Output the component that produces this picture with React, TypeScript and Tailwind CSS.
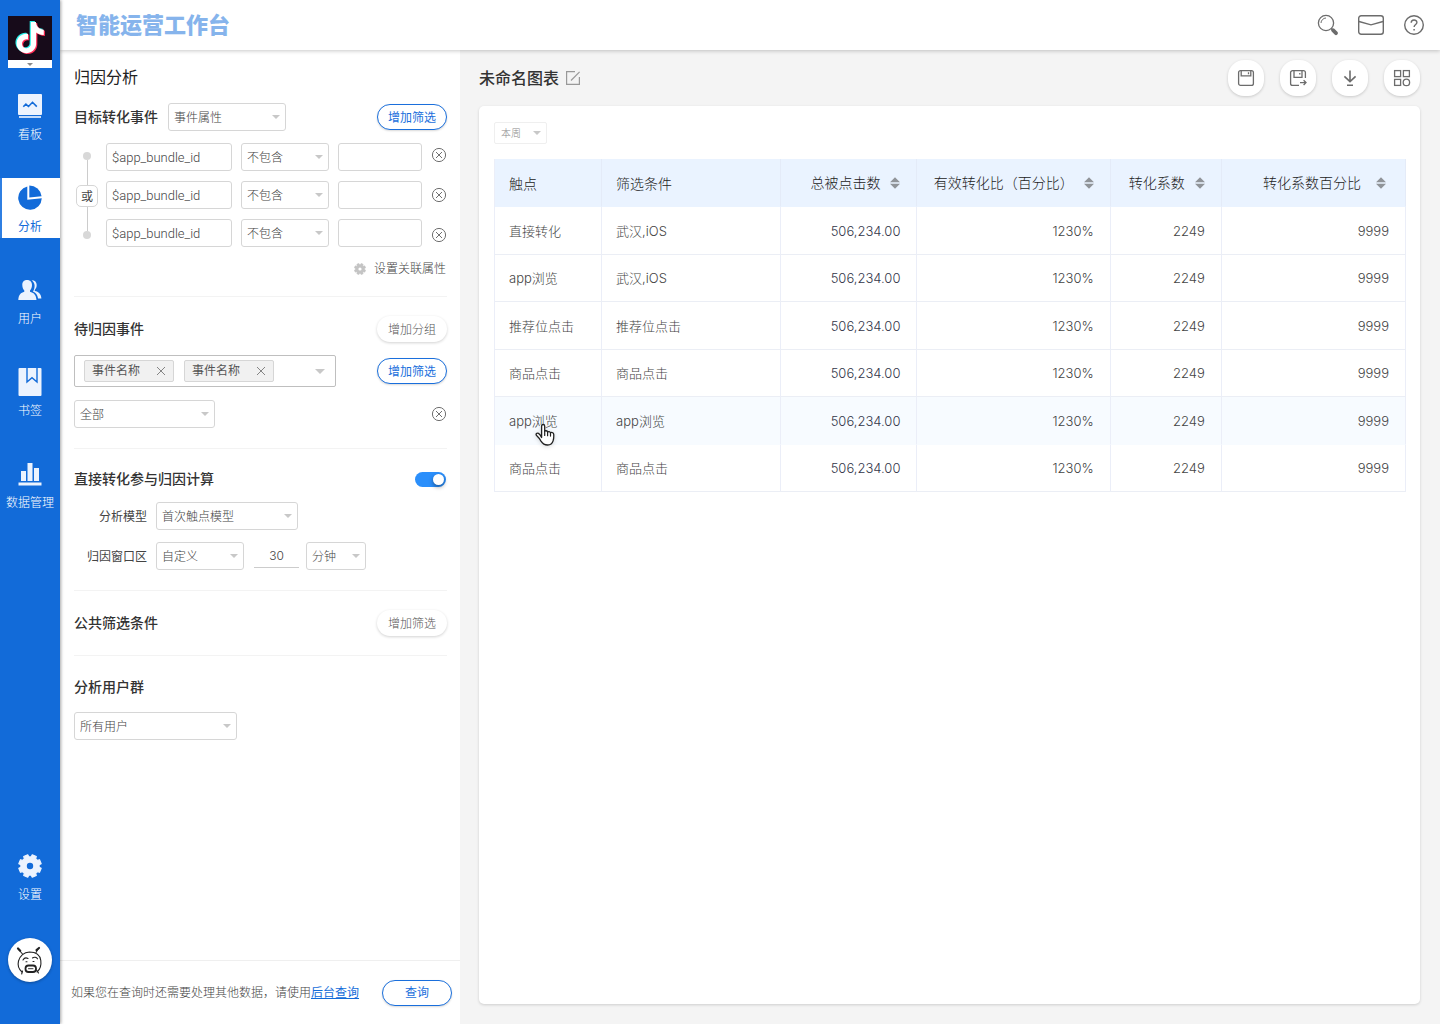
import type { ReactNode } from "react";

const NOTE =
  "M12.525.02c1.31-.02 2.61-.01 3.91-.02.08 1.53.63 3.09 1.75 4.17 1.12 1.11 2.7 1.62 4.24 1.79v4.03c-1.44-.05-2.89-.35-4.2-.97-.57-.26-1.1-.59-1.62-.93-.01 2.92.01 5.84-.02 8.75-.08 1.4-.54 2.79-1.35 3.94-1.31 1.92-3.58 3.17-5.91 3.21-1.43.08-2.86-.31-4.08-1.03-2.02-1.19-3.44-3.37-3.65-5.71-.02-.5-.03-1-.01-1.49.18-1.9 1.12-3.72 2.58-4.96 1.66-1.44 3.98-2.13 6.15-1.72.02 1.48-.04 2.96-.04 4.44-.99-.32-2.15-.23-3.02.37-.63.41-1.11 1.04-1.36 1.75-.21.51-.15 1.07-.14 1.61.24 1.64 1.82 3.02 3.5 2.87 1.12-.01 2.19-.66 2.77-1.61.19-.33.4-.67.41-1.06.1-1.79.06-3.57.07-5.36.01-4.03-.01-8.05.02-12.07z";

const GEAR_POINTS = Array.from({ length: 8 }, (_, i) => {
  const mid = 22.5 + i * 45;
  return [
    [-15, 9.2],
    [-11, 11.4],
    [11, 11.4],
    [15, 9.2],
  ]
    .map(([da, r]) => {
      const a = ((mid + da) * Math.PI) / 180;
      return `${(12 + r * Math.cos(a)).toFixed(2)},${(12 + r * Math.sin(a)).toFixed(2)}`;
    })
    .join(" ");
}).join(" ");

function Gear({ className, hole }: { className: string; hole: string }) {
  return (
    <svg viewBox="0 0 24 24" className={className} aria-hidden="true">
      <polygon points={GEAR_POINTS} fill="currentColor" stroke="currentColor" strokeWidth="1.2" strokeLinejoin="round" />
      <circle cx="12" cy="12" r="3.2" fill={hole} />
    </svg>
  );
}

function Caret({ className }: { className: string }) {
  return (
    <svg viewBox="0 0 8 4" className={className} aria-hidden="true">
      <path d="M0 0h8L4 4z" fill="currentColor" />
    </svg>
  );
}

function Select({ label, value, className }: { label: string; value: string; className: string }) {
  return (
    <div className={`relative shrink-0 ${className}`}>
      <select
        aria-label={label}
        className="block h-7 w-full appearance-none rounded-[3px] border border-[#d6d6d6] bg-white pt-0.5 pr-5 pl-[5px] text-xs font-light text-[#444]"
      >
        <option>{value}</option>
      </select>
      <Caret className="pointer-events-none absolute top-3 right-1.5 h-1 w-2 text-[#c8c8c8]" />
    </div>
  );
}

function Pill({ children, primary }: { children: ReactNode; primary?: boolean }) {
  return (
    <button
      type="button"
      className={`h-[26px] w-[70px] shrink-0 rounded-full bg-white pt-px text-xs ${
        primary
          ? "border border-[#1a6fdc] text-[#1a6fdc] shadow-[0_1px_2px_rgba(0,0,0,0.15)]"
          : "font-light text-[#555] shadow-[0_1px_3px_rgba(0,0,0,0.18)]"
      }`}
    >
      {children}
    </button>
  );
}

function Remove({ label }: { label: string }) {
  return (
    <button type="button" aria-label={label} className="block size-4 shrink-0">
      <svg viewBox="0 0 16 16" fill="none" stroke="#707070" strokeWidth="1" className="size-4">
        <circle cx="8" cy="8" r="6.6" />
        <path d="M5 5l6 6M11 5l-6 6" />
      </svg>
    </button>
  );
}

function Logo() {
  return (
    <button type="button" aria-label="切换应用" className="mt-4 block w-11 shrink-0 bg-white">
      <svg viewBox="0 0 44 44" className="block size-11">
        <rect width="44" height="44" fill="#170b1a" />
        <g transform="translate(6.6 6) scale(1.3)">
          <path d={NOTE} fill="#2af0ea" transform="translate(-0.9 -0.7)" />
          <path d={NOTE} fill="#fe2c55" transform="translate(0.9 0.7)" />
          <path d={NOTE} fill="#fff" />
        </g>
      </svg>
      <span className="flex h-2 items-center justify-center">
        <Caret className="h-[3px] w-1.5 text-[#8a8a8a]" />
      </span>
    </button>
  );
}

const BoardIcon = (
  <svg viewBox="0 0 24 24" className="size-6">
    <rect width="24" height="21" rx="1" fill="#ecf3fe" />
    <rect x="1" y="22" width="22" height="2" fill="#c3dbfa" />
    <path d="M5.3 12.7l2.6-2.6 2.6 2.4 4-4.2 4.3 4.3" fill="none" stroke="#126bd9" strokeWidth="1.6" />
  </svg>
);
const PieIcon = (
  <svg viewBox="0 0 24 26" className="h-[26px] w-6" fill="#126bd9">
    <path d="M9.3 1.4V14.8L23.8 13.3A11.8 11.8 0 1 1 9.3 1.4z" />
    <path d="M11.3 0.4A12.5 12.5 0 0 1 23.6 11.2L11.3 12.5z" />
  </svg>
);
const UsersIcon = (
  <svg viewBox="0 0 24 20" className="h-5 w-6" fill="#ecf3fe">
    <path d="M9 0C12.4 0 14 2.3 14 5.1c0 2.3-.9 4.3-2 5.4v1.2c3.6 1 6.1 2.8 6.5 8.3H.3c.3-5.500 2.600-7.300 6-8.300v-1.200c-1.100-1.100-2-3.100-2-5.400C4.300 2.300 5.600 0 9 0z" />
    <path d="M13.600 .2c3.400 0 5.100 2 5.100 4.900 0 2-.7 3.700-1.900 4.800v1.200c3.800.8 6.200 2.700 6.600 7.400h-3.300c-.6-3.700-2.300-6-5.200-7.100 1.200-1.500 1.700-3.700 1.700-6 0-2-1.400-4.200-3-5.200z" />
  </svg>
);
const BookmarkIcon = (
  <svg viewBox="0 0 24 28" className="h-7 w-6">
    <rect x="0.5" width="23" height="28" rx="1" fill="#ecf3fe" />
    <path d="M9 0v14l5-4.4 5 4.4V0" fill="none" stroke="#126bd9" strokeWidth="1.4" />
  </svg>
);
const BarsIcon = (
  <svg viewBox="0 0 24 24" className="size-6" fill="#ecf3fe">
    <rect x="3" y="9" width="5" height="10" />
    <rect x="9.5" y="1" width="5" height="18" />
    <rect x="16" y="6" width="5" height="13" />
    <rect x="0.5" y="20.5" width="23" height="3" />
  </svg>
);

function NavItem({ icon, label, active }: { icon: ReactNode; label: string; active?: boolean }) {
  return (
    <a
      href="#"
      aria-current={active ? "page" : undefined}
      className={`block h-[60px] w-full pt-1 text-center text-xs ${
        active ? "bg-white text-[#126bd9] shadow-[inset_2px_0_#2f7fe2]" : "font-light text-white"
      }`}
    >
      <span className="flex h-8 items-center justify-center">{icon}</span>
      <span className="block leading-[26px] whitespace-nowrap">{label}</span>
    </a>
  );
}

function Avatar() {
  return (
    <button type="button" aria-label="账户" className="mt-8 block size-11 shrink-0 rounded-full bg-white shadow-[0_1px_3px_rgba(0,0,0,0.3)]">
      <svg viewBox="0 0 44 44" fill="none" stroke="#222" strokeWidth="1.1" strokeLinecap="round" className="size-11">
        <path d="M14 34c-3.5-3-4.5-7-3.5-11 1.5-5 5-8.5 11-9 6 0 10.5 3 11.3 8.5.6 4.5-.8 9-3.8 11.5" />
        <path d="M14.5 16l-3.5-4M28 14.5l2.5-4M14.5 33l-.8 3M28.500 32l2 3" />
        <path d="M10 10.500l2.200 2.200M31 10l-2.500 2" strokeWidth="2.2" />
        <path d="M15 22c1-1.800 3-2.500 5-1.500M24.500 20c1.500-1.300 4-1 5 .8M18 23.800h1M25 23.500h1" />
        <rect x="17.5" y="27.5" width="10.5" height="6.5" rx="3" strokeWidth="1.8" />
        <path d="M20.500 30.700h4.500" strokeWidth="0.9" />
      </svg>
    </button>
  );
}

function Sidebar() {
  return (
    <nav className="relative z-20 flex w-[60px] shrink-0 flex-col items-center bg-[#126bd9] shadow-[1px_0_3px_rgba(0,0,0,0.35)]">
      <Logo />
      <div className="mt-[18px] flex w-full flex-col gap-8">
        <NavItem icon={BoardIcon} label="看板" />
        <NavItem icon={PieIcon} label="分析" active />
        <NavItem icon={UsersIcon} label="用户" />
        <NavItem icon={BookmarkIcon} label="书签" />
        <NavItem icon={BarsIcon} label="数据管理" />
      </div>
      <div className="mt-auto flex w-full flex-col items-center pb-[42px]">
        <NavItem icon={<Gear className="size-6 text-[#ecf3fe]" hole="#126bd9" />} label="设置" />
        <Avatar />
      </div>
    </nav>
  );
}

function Header() {
  return (
    <header className="relative z-10 flex h-[50px] shrink-0 items-center bg-white pr-[15px] pl-4 shadow-[0_1px_4px_rgba(0,0,0,0.22)]">
      <h1 className="text-[22px] font-black text-[#86b4ec]">智能运营工作台</h1>
      <div className="ml-auto flex items-center gap-[19px]">
        <button type="button" aria-label="搜索">
          <svg viewBox="0 0 22 22" fill="none" stroke="#6c6c6c" strokeWidth="1.3" className="block size-[22px]">
            <circle cx="9" cy="9" r="7.6" />
            <path d="M4 9a5.2 5.2 0 0 1 5-5" strokeWidth="1" />
            <path d="M14.3 14.5l1.8 1.8" />
            <path d="M16 16.2l3 3" strokeWidth="3.8" strokeLinecap="round" />
          </svg>
        </button>
        <button type="button" aria-label="消息">
          <svg viewBox="0 0 26 20" fill="none" stroke="#6c6c6c" strokeWidth="1.4" className="block h-5 w-[26px]">
            <rect x="0.7" y="0.7" width="24.6" height="18.6" rx="2.5" />
            <path d="M1 6.5l12 3.3 12-3.3" />
          </svg>
        </button>
        <button type="button" aria-label="帮助">
          <svg viewBox="0 0 22 22" fill="none" stroke="#6c6c6c" strokeWidth="1.4" className="block size-[22px]">
            <circle cx="11" cy="11" r="9.3" />
            <path d="M8.2 8.8c0-3.7 5.7-3.6 5.7-.4 0 2-2.8 2.2-2.8 4.7" />
            <path d="M11.1 14.9v1.5" strokeWidth="1.5" />
          </svg>
        </button>
      </div>
    </header>
  );
}

function ConditionRow({ index }: { index: number }) {
  return (
    <div className="flex gap-[9px]">
      <input
        aria-label={`属性 ${index}`}
        defaultValue="$app_bundle_id"
        className="h-7 min-w-0 flex-1 rounded-[3px] border border-[#d6d6d6] bg-white px-[5px] text-[13px] font-light text-[#444]"
      />
      <Select label={`条件 ${index}`} value="不包含" className="w-[88px]" />
      <input aria-label={`值 ${index}`} className="h-7 w-[84px] rounded-[3px] border border-[#d6d6d6] bg-white px-[5px] text-xs" />
    </div>
  );
}

function Tag({ children }: { children: string }) {
  return (
    <span className="flex h-[22px] w-[90px] items-center justify-between rounded-[2px] border border-[#d6d6d6] bg-[#f1f1f1] pr-2 pl-[7px] text-xs text-[#555]">
      {children}
      <button type="button" aria-label={`移除${children}`}>
        <svg viewBox="0 0 8 8" stroke="#777" strokeWidth="0.9" className="block size-2">
          <path d="M0 0l8 8M8 0L0 8" />
        </svg>
      </button>
    </span>
  );
}

function QueryPanel() {
  return (
    <aside className="flex w-[400px] shrink-0 flex-col bg-white">
      <div className="pr-[13px] pl-3.5">
        <section className="border-b border-[#f3f3f3] pt-4 pb-[17px]">
          <h2 className="text-base leading-6 font-normal text-[#222]">归因分析</h2>
          <div className="mt-[13px] flex items-center">
            <h3 className="text-sm font-medium text-[#333]">目标转化事件</h3>
            <Select label="目标转化事件" value="事件属性" className="ml-2.5 w-[118px]" />
            <div className="ml-auto">
              <Pill primary>增加筛选</Pill>
            </div>
          </div>
          <div className="mt-3 flex">
            <div className="mr-1.5 flex w-[26px] flex-col items-center pt-[9px] pb-2">
              <span className="size-2 rounded-full bg-[#d8d8d8]" />
              <span className="w-px flex-1 bg-[#ccc]" />
              <span className="flex h-[22px] w-[22px] items-center justify-center rounded-[5px] border border-[#d6d6d6] pt-0.5 text-xs text-[#444]">
                或
              </span>
              <span className="w-px flex-1 bg-[#ccc]" />
              <span className="size-2 rounded-full bg-[#d8d8d8]" />
            </div>
            <div className="flex min-w-0 flex-1 flex-col gap-2.5">
              <ConditionRow index={1} />
              <ConditionRow index={2} />
              <ConditionRow index={3} />
            </div>
            <div className="ml-[9px] flex flex-col justify-between py-1">
              <Remove label="删除条件 1" />
              <Remove label="删除条件 2" />
              <Remove label="删除条件 3" />
            </div>
          </div>
          <button type="button" className="mt-3 ml-auto flex items-center gap-2 pr-px text-xs leading-5 font-light text-[#444]">
            <Gear className="size-3 text-[#c4c4c4]" hole="#fff" />
            设置关联属性
          </button>
        </section>

        <section className="border-b border-[#f3f3f3] pt-[19px] pb-5">
          <div className="flex items-center justify-between">
            <h3 className="text-sm font-medium text-[#333]">待归因事件</h3>
            <Pill>增加分组</Pill>
          </div>
          <div className="mt-[13px] flex items-center justify-between">
            <div className="flex h-8 w-[262px] items-center gap-2.5 rounded-[2px] border border-[#bfbfbf] pl-[9px]">
              <Tag>事件名称</Tag>
              <Tag>事件名称</Tag>
              <button type="button" aria-label="展开事件" className="mr-2.5 ml-auto">
                <Caret className="block h-[5px] w-2.5 text-[#c8c8c8]" />
              </button>
            </div>
            <Pill primary>增加筛选</Pill>
          </div>
          <div className="mt-[13px] flex items-center justify-between">
            <Select label="事件范围" value="全部" className="w-[141px]" />
            <Remove label="删除筛选" />
          </div>
        </section>

        <section className="border-b border-[#f3f3f3] py-5">
          <div className="flex items-center justify-between">
            <h3 className="text-sm font-medium text-[#333]">直接转化参与归因计算</h3>
            <label className="relative mr-px block h-[15px] w-[31px]">
              <input type="checkbox" defaultChecked aria-label="直接转化参与归因计算" className="peer sr-only" />
              <span className="block h-full rounded-full bg-[#ccc] peer-checked:bg-[#2b8ffb]" />
              <span className="absolute top-0.5 right-0.5 size-[11px] rounded-full bg-white shadow-[0_2px_4px_rgba(0,0,0,0.4)]" />
            </label>
          </div>
          <div className="mt-[13px] flex items-center">
            <span className="w-[73px] pt-0.5 text-right text-xs text-[#444]">分析模型</span>
            <Select label="分析模型" value="首次触点模型" className="ml-[9px] w-[142px]" />
          </div>
          <div className="mt-3 flex items-center">
            <span className="w-[73px] pt-0.5 text-right text-xs text-[#444]">归因窗口区</span>
            <Select label="归因窗口区" value="自定义" className="ml-[9px] w-[88px]" />
            <input
              aria-label="窗口时长"
              defaultValue="30"
              className="mr-[7px] ml-2.5 h-6 w-[45px] border-b border-[#ccc] text-center font-[Inter] text-xs font-light text-[#444]"
            />
            <Select label="时间单位" value="分钟" className="w-[60px]" />
          </div>
        </section>

        <section className="flex items-center justify-between border-b border-[#f3f3f3] py-[19px]">
          <h3 className="text-sm font-medium text-[#333]">公共筛选条件</h3>
          <Pill>增加筛选</Pill>
        </section>

        <section className="pt-[21px]">
          <h3 className="text-sm font-medium text-[#333]">分析用户群</h3>
          <Select label="分析用户群" value="所有用户" className="mt-[15px] w-[163px]" />
        </section>
      </div>

      <footer className="mt-auto flex h-16 items-center justify-between border-t border-[#efefef] pr-2 pl-[11px]">
        <p className="text-xs font-light text-[#444]">
          如果您在查询时还需要处理其他数据，请使用
          <a href="#" className="font-normal text-[#126bd9] underline">
            后台查询
          </a>
        </p>
        <Pill primary>查询</Pill>
      </footer>
    </aside>
  );
}

function ToolButton({ label, children }: { label: string; children: ReactNode }) {
  return (
    <button
      type="button"
      aria-label={label}
      className="flex size-9 items-center justify-center rounded-2xl bg-white shadow-[0_1px_3px_rgba(0,0,0,0.18)]"
    >
      <svg viewBox="0 0 18 18" fill="none" stroke="#6c6c6c" strokeWidth="1.3" className="size-[18px]">
        {children}
      </svg>
    </button>
  );
}

function SortIcon() {
  return (
    <svg viewBox="0 0 10 12" fill="#909499" className="h-3 w-2.5" aria-hidden="true">
      <path d="M0 5.2h10L5 0.2zM0 6.8h10L5 11.8z" />
    </svg>
  );
}

function HandCursor() {
  return (
    <svg viewBox="0 0 22 24" className="pointer-events-none absolute top-[26px] left-[39px] h-6 w-[22px] drop-shadow-sm" aria-hidden="true">
      <path
        d="M7.6 14.5V3.2c0-2.3 3.1-2.3 3.1 0v5.3c.3-1.2 2.7-1 2.9.6.5-.9 2.7-.7 2.9.8.7-.8 3-.5 3.2 1.2.2 2.5.1 4.7-.6 6.8-.8 2.6-2.5 4.1-5.5 4.1-3.4 0-5-1.3-6.6-3.9-1.1-1.900-2.300-3.600-4.400-5.600-1.300-1.500.3-3 1.900-2.100 1.200.7 2.200 2 3.100 4.100z"
        fill="#fff"
        stroke="#222"
        strokeWidth="1.3"
        strokeLinejoin="round"
      />
      <path d="M10.700 8.500v4M13.600 9.100v3.600M16.500 9.900v3.200" stroke="#222" strokeWidth="1.2" strokeLinecap="round" />
    </svg>
  );
}

const COLUMNS = [
  { title: "触点", width: "w-[107px]" },
  { title: "筛选条件", width: "w-[179px]" },
  { title: "总被点击数", width: "w-[136px]" },
  { title: "有效转化比（百分比）", width: "w-[193px]" },
  { title: "转化系数", width: "w-[111px]" },
  { title: "转化系数百分比", width: "w-[184px]" },
];

const ROWS = [
  ["直接转化", "武汉,iOS"],
  ["app浏览", "武汉,iOS"],
  ["推荐位点击", "推荐位点击"],
  ["商品点击", "商品点击"],
  ["app浏览", "app浏览"],
  ["商品点击", "商品点击"],
].map(([a, b]) => [a, b, "506,234.00", "1230%", "2249", "9999"]);

function ReportTable() {
  return (
    <table className="mt-[15px] h-[333px] w-full table-fixed border-separate border-spacing-0 border-l border-[#ebeef8]">
      <thead>
        <tr className="h-12 bg-[#eaf3ff]">
          {COLUMNS.map((col, i) => (
            <th
              key={col.title}
              className={`${col.width} border-r border-b border-r-[#e4ebf8] border-b-[#eaf3ff] text-sm font-light whitespace-nowrap text-[#222] ${
                i < 2 ? "pt-0.5 pl-3.5 text-left" : i === 5 ? "pr-[19px]" : "pr-4"
              }`}
            >
              {i < 2 ? (
                col.title
              ) : (
                <button type="button" className={`ml-auto flex items-center ${i === 5 ? "gap-[15px]" : "gap-2.5"}`}>
                  {col.title}
                  <SortIcon />
                </button>
              )}
            </th>
          ))}
        </tr>
      </thead>
      <tbody className="font-['Inter','Noto_Sans_CJK_SC',sans-serif] text-[13px]">
        {ROWS.map((row, r) => (
          <tr key={r} className={r === 4 ? "h-[47px] bg-[#f7fbff]" : "h-[47px]"}>
            {row.map((cell, c) => (
              <td
                key={c}
                className={`relative border-r border-b border-r-[#ebeef8] pt-0.5 font-light ${
                  r === 4 ? "border-b-[#f7fbff]" : "border-b-[#ebeef5]"
                } ${c < 2 ? "pl-3.5 text-[#444]" : `pr-4 text-right ${c === 2 ? "text-[#33364a]" : "text-[#444]"}`}`}
              >
                {cell}
                {r === 4 && c === 0 && <HandCursor />}
              </td>
            ))}
          </tr>
        ))}
      </tbody>
    </table>
  );
}

function Report() {
  return (
    <main className="flex min-w-0 flex-1 flex-col bg-[#f4f4f4] pt-2.5 pr-5 pb-5 pl-[19px]">
      <div className="flex h-9 items-center">
        <h2 className="pt-0.5 text-base font-medium text-[#333]">未命名图表</h2>
        <button type="button" aria-label="重命名" className="ml-[7px]">
          <svg viewBox="0 0 14 14" fill="none" stroke="#999" strokeWidth="1.2" className="block size-3.5">
            <path d="M9 0.6H0.6v12.8h12.8V6" />
            <path d="M5 9.5L13.6 0.8" />
          </svg>
        </button>
        <div className="ml-auto flex gap-4">
          <ToolButton label="保存">
            <rect x="1.6" y="1.6" width="14.8" height="14.8" rx="2" />
            <path d="M4.2 1.6v5.2h9.6V1.6M11.5 3.3v2" />
          </ToolButton>
          <ToolButton label="另存为">
            <path d="M16.4 9V3.6a2 2 0 0 0-2-2H3.6a2 2 0 0 0-2 2v10.8a2 2 0 0 0 2 2H10" />
            <path d="M5 1.6v6.7h8V1.6M10.8 4v1.5M11 13.6h6M14.6 11.2l2.4 2.4-2.4 2.4" />
          </ToolButton>
          <ToolButton label="下载">
            <path d="M9 1.5v10.8M3.4 7.3L9 12.6l5.6-5.3M6 16.3h6" strokeWidth="1.6" />
          </ToolButton>
          <ToolButton label="布局">
            <rect x="1.6" y="1.6" width="6" height="6" />
            <rect x="10.4" y="1.6" width="6" height="6" />
            <rect x="1.6" y="10.4" width="6" height="6" />
            <circle cx="13.4" cy="13.4" r="3.2" />
          </ToolButton>
        </div>
      </div>
      <section className="mt-2.5 flex-1 rounded-[5px] bg-white pt-4 pr-3.5 pl-[15px] shadow-[0_1px_3px_rgba(0,0,0,0.16)]">
        <div className="relative w-[53px]">
          <select
            aria-label="时间范围"
            className="block h-[22px] w-full appearance-none rounded-[2px] border border-[#efefef] bg-white pl-1.5 text-[10px] font-light text-[#888]"
          >
            <option>本周</option>
          </select>
          <Caret className="pointer-events-none absolute top-[9px] right-1.5 h-1 w-2 text-[#c8c8c8]" />
        </div>
        <ReportTable />
      </section>
    </main>
  );
}

export default function App() {
  return (
    <div className="flex min-h-screen bg-[#f4f4f4] font-['Roboto','Noto_Sans_CJK_SC',sans-serif]">
      <Sidebar />
      <div className="flex min-w-0 flex-1 flex-col">
        <Header />
        <div className="flex flex-1">
          <QueryPanel />
          <Report />
        </div>
      </div>
    </div>
  );
}
